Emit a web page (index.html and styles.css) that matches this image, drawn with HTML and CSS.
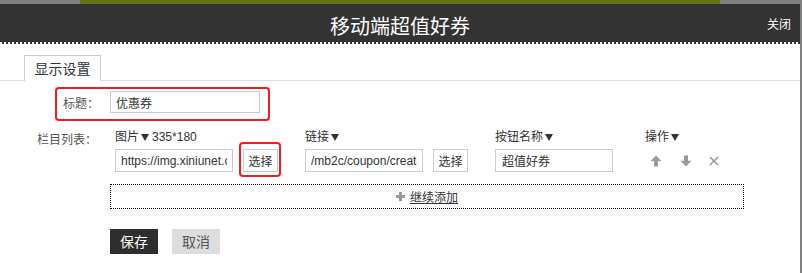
FILE: index.html
```html
<!DOCTYPE html>
<html lang="zh-CN">
<head>
<meta charset="utf-8">
<title>移动端超值好券</title>
<link rel="stylesheet" href="styles.css">
</head>
<body>
<div class="backdrop-strip"></div>
<div class="modal">
  <div class="modal-header">
    <span class="spacer"></span>
    <h1 class="modal-title">移动端超值好券</h1>
    <a class="modal-close">关闭</a>
  </div>
  <div class="header-line"></div>
  <div class="tabs">
    <div class="tab active">显示设置</div>
  </div>
  <div class="form">
    <div class="title-row">
      <label class="form-label title-label">标题：</label>
      <input class="text-input title-input" type="text" value="优惠券">
    </div>
    <div class="list-row">
      <label class="form-label list-label">栏目列表：</label>
      <div class="list">
        <div class="list-head">
          <div class="col col-img">图片<span class="caret"></span>335*180</div>
          <div class="col col-link">链接<span class="caret"></span></div>
          <div class="col col-name">按钮名称<span class="caret"></span></div>
          <div class="col col-op">操作<span class="caret"></span></div>
        </div>
        <div class="list-item">
          <div class="col col-img">
            <input class="text-input cell-input" type="text" value="https://img.xiniunet.com/coupon/banner.jpg">
            <button class="select-btn marked">选择</button>
          </div>
          <div class="col col-link">
            <input class="text-input cell-input" type="text" value="/mb2c/coupon/create">
            <button class="select-btn">选择</button>
          </div>
          <div class="col col-name">
            <input class="text-input cell-input name-input" type="text" value="超值好券">
          </div>
          <div class="col col-op ops">
            <svg class="op-icon" width="12" height="12" viewBox="0 0 12 12"><path d="M6 0.5 L11.6 6.2 L8 6.2 L8 11.6 L4 11.6 L4 6.2 L0.4 6.2 Z" fill="#9a9a9a"/></svg>
            <svg class="op-icon" width="12" height="12" viewBox="0 0 12 12"><path d="M6 11.5 L11.6 5.8 L8 5.8 L8 0.4 L4 0.4 L4 5.8 L0.4 5.8 Z" fill="#9a9a9a"/></svg>
            <svg class="op-icon" width="10" height="10" viewBox="0 0 10 10"><path d="M1 1 L9 9 M9 1 L1 9" stroke="#9a9a9a" stroke-width="1.6" fill="none"/></svg>
          </div>
        </div>
        <div class="add-box">
          <svg class="plus" width="9" height="9" viewBox="0 0 9 9"><path d="M3 0 H6 V3 H9 V6 H6 V9 H3 V6 H0 V3 H3 Z" fill="#999"/></svg>
          <a class="add-link">继续添加</a>
        </div>
      </div>
    </div>
    <div class="actions">
      <button class="btn btn-primary">保存</button>
      <button class="btn btn-cancel">取消</button>
    </div>
  </div>
</div>
</body>
</html>
```
FILE: styles.css
```css
html, body {
  margin: 0;
  padding: 0;
}
body {
  background: #808080;
  font-family: "Liberation Sans", "Noto Sans CJK SC", sans-serif;
  font-size: 12px;
  color: #333;
  height: 273px;
  overflow: hidden;
}
.backdrop-strip {
  height: 4px;
  background: linear-gradient(90deg, #808080 0 80px, #647319 80px 720px, #808080 720px);
}
.modal {
  width: 800px;
  height: 269px;
  background: #fff;
}
.modal-header {
  height: 38px;
  background: #333;
  display: grid;
  grid-template-columns: 1fr auto 1fr;
  color: #fff;
}
.modal-title {
  margin: 0;
  align-self: start;
  padding-top: 9px;
  font-family: "Noto Sans CJK SC", sans-serif;
  font-size: 20px;
  font-weight: 400;
  line-height: 26px;
}
.modal-close {
  align-self: center;
  justify-self: end;
  padding-right: 9px;
  font-family: "Noto Sans CJK SC", sans-serif;
  font-size: 12px;
  color: #fff;
}
.header-line {
  height: 2px;
  background: repeating-linear-gradient(90deg, #fff 0 2px, #333 2px 4px);
}
.tabs {
  display: flex;
  padding: 11px 0 0 24px;
  border-bottom: 1px solid #ddd;
}
.tab {
  box-sizing: border-box;
  width: 77px;
  height: 26px;
  margin-bottom: -1px;
  border: 1px solid #ccc;
  border-bottom: 0;
  background: #fff;
  text-align: center;
  font-family: "Noto Sans CJK SC", sans-serif;
  font-size: 14px;
  line-height: 25px;
  color: #333;
}
.form-label {
  color: #555;
  font-family: "Noto Sans CJK SC", sans-serif;
  font-size: 12px;
}
.text-input {
  box-sizing: border-box;
  border: 1px solid #ccc;
  background: #fff;
  font: inherit;
  font-size: 12px;
  color: #333;
  outline: none;
  margin: 0;
}
.title-row {
  box-sizing: border-box;
  display: flex;
  align-items: center;
  width: 215px;
  height: 34px;
  margin: 6px 0 0 55px;
  padding: 0 0 4px 6px;
  border: 2px solid #f21d1d;
  border-radius: 4px;
}
.title-label {
  width: 47px;
}
.title-input {
  width: 150px;
  height: 22px;
  padding: 0 5px;
}
.list-row {
  display: flex;
  margin-top: 8px;
}
.list-label {
  margin-left: 37px;
  width: 78px;
  padding-top: 2px;
  line-height: 16px;
}
.list {
  display: flex;
  flex-direction: column;
}
.list-head {
  display: flex;
  line-height: 16px;
  margin-bottom: 4px;
}
.list-head .col {
  display: flex;
  align-items: center;
}
.col-img, .col-link {
  width: 190px;
}
.col-name {
  width: 150px;
}
.caret {
  display: inline-block;
  width: 0;
  height: 0;
  margin: 0 3px 0 2px;
  border-left: 4px solid transparent;
  border-right: 4px solid transparent;
  border-top: 7px solid #333;
}
.list-item {
  display: flex;
  height: 23px;
}
.list-item .col {
  display: flex;
  align-items: center;
}
.cell-input {
  width: 118px;
  height: 23px;
  padding: 0 5px;
}
.name-input {
  padding: 0 6px;
}
.select-btn {
  position: relative;
  box-sizing: border-box;
  width: 35px;
  height: 23px;
  margin: 0 0 0 10px;
  padding: 0;
  border: 1px solid #ccc;
  background: #fff;
  font-family: "Noto Sans CJK SC", sans-serif;
  font-size: 12px;
  color: #333;
}
.select-btn.marked::after {
  content: "";
  position: absolute;
  top: -8px;
  bottom: -6px;
  left: -5px;
  right: -4px;
  border: 2px solid #f21d1d;
  border-radius: 4px;
}
.ops {
  padding-left: 5px;
  gap: 18px;
}
.op-icon {
  display: block;
}
.op-icon:last-child {
  margin-left: -1px;
}
.add-box {
  box-sizing: border-box;
  display: flex;
  align-items: center;
  justify-content: center;
  width: 634px;
  height: 25px;
  margin: 12px 0 0 -5px;
  border: 1px dotted #000;
}
.plus {
  display: block;
}
.add-link {
  margin-left: 5px;
  font-family: "Noto Sans CJK SC", sans-serif;
  color: #333;
  text-decoration: underline;
}
.actions {
  display: flex;
  gap: 14px;
  margin: 20px 0 0 110px;
}
.btn {
  width: 48px;
  height: 25px;
  padding: 0;
  border: 0;
  font-family: "Noto Sans CJK SC", sans-serif;
  font-size: 14px;
  line-height: 25px;
  text-align: center;
}
.btn-primary {
  background: #2d2d2d;
  color: #fff;
}
.btn-cancel {
  background: #ddd;
  color: #555;
}
```
